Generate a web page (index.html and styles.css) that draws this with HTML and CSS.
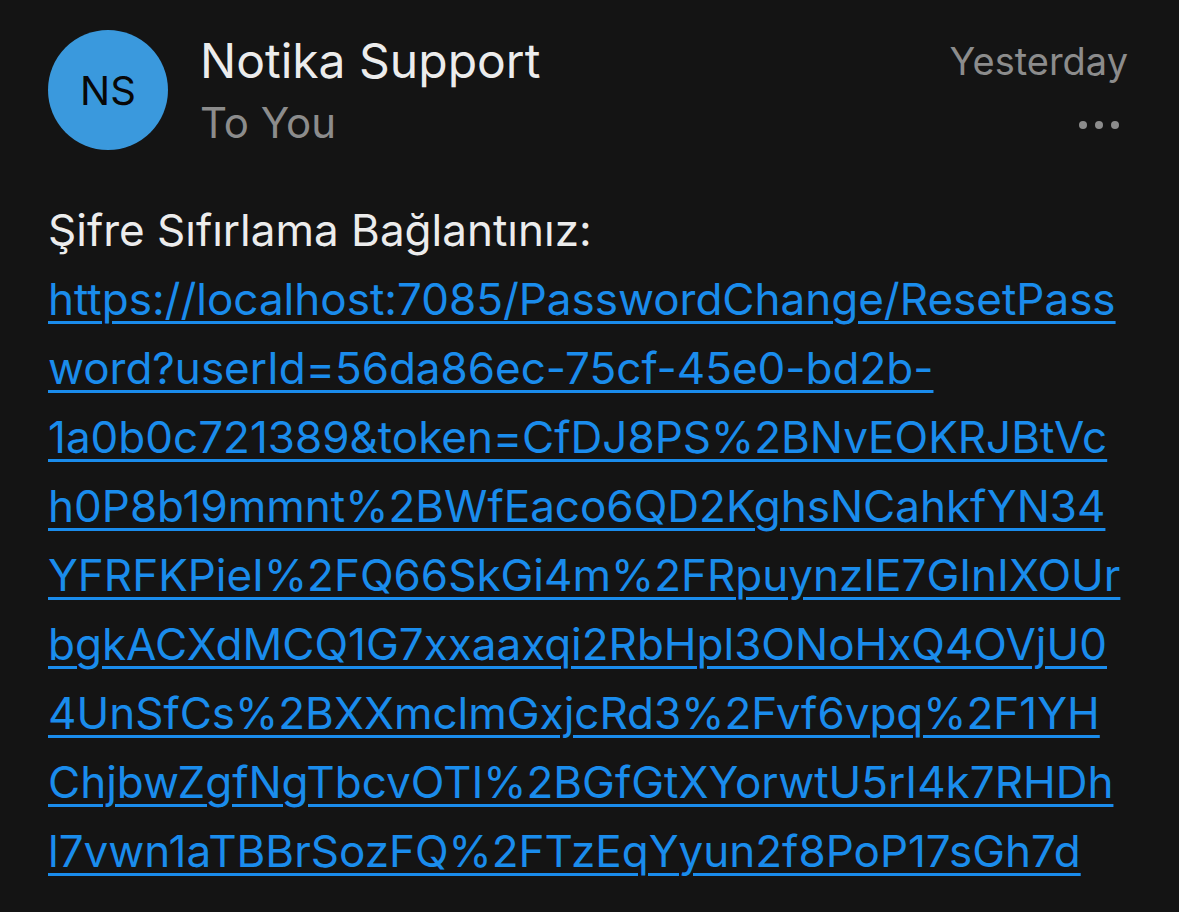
FILE: index.html
```html
<!DOCTYPE html>
<html lang="tr">
<head>
<meta charset="utf-8">
<link rel="stylesheet" href="styles.css">
</head>
<body>
<div class="mail">
  <header class="head">
    <div class="avatar">NS</div>
    <div class="who">
      <div class="name">Notika Support</div>
      <div class="to">To You</div>
    </div>
    <div class="meta">
      <div class="date">Yesterday</div>
      <div class="more"><span></span><span></span><span></span></div>
    </div>
  </header>
  <div class="body">
    <p class="intro">Şifre Sıfırlama Bağlantınız:</p>
    <a class="link" href="#">https://localhost:7085/PasswordChange/ResetPass<br>word?userId=56da86ec-75cf-45e0-bd2b-<br>1a0b0c721389&amp;token=CfDJ8PS%2BNvEOKRJBtVc<br>h0P8b19mmnt%2BWfEaco6QD2KghsNCahkfYN34<br>YFRFKPieI%2FQ66SkGi4m%2FRpuynzIE7GInIXOUr<br>bgkACXdMCQ1G7xxaaxqi2RbHpl3ONoHxQ4OVjU0<br>4UnSfCs%2BXXmclmGxjcRd3%2Fvf6vpq%2F1YH<br>ChjbwZgfNgTbcvOTI%2BGfGtXYorwtU5rI4k7RHDh<br>l7vwn1aTBBrSozFQ%2FTzEqYyun2f8PoP17sGh7d</a>
  </div>
</div>
</body>
</html>
```

FILE: styles.css
```css
html, body {
  margin: 0;
  padding: 0;
  background: #141414;
}
body {
  font-family: Inter, "Noto Sans", sans-serif;
  color: #ececec;
}
.mail {
  padding: 30px 51px 0 48px;
}
.head {
  display: flex;
  align-items: flex-start;
}
.avatar {
  width: 120px;
  height: 120px;
  border-radius: 50%;
  background: #3a99dd;
  color: #080808;
  font-size: 40px;
  display: flex;
  align-items: center;
  justify-content: center;
  flex: none;
}
.who {
  margin-left: 32px;
  flex: 1;
}
.name {
  font-size: 48px;
  line-height: 62px;
  color: #ececec;
}
.to {
  font-size: 42px;
  line-height: 62px;
  color: #8c8c8c;
}
.meta {
  display: flex;
  flex-direction: column;
  align-items: flex-end;
}
.date {
  font-size: 38px;
  line-height: 62px;
  color: #8c8c8c;
}
.more {
  display: flex;
  gap: 8px;
  margin-top: 29px;
  margin-right: 9px;
}
.more span {
  width: 8px;
  height: 8px;
  border-radius: 50%;
  background: #8c8c8c;
}
.body {
  margin-top: 42px;
  font-size: 44px;
  line-height: 69px;
}
.intro {
  margin: 0;
  color: #ececec;
}
.link {
  color: #1a8cec;
  text-decoration: underline;
  text-decoration-thickness: 3px;
  text-underline-offset: 6px;
  word-break: break-all;
}
```
